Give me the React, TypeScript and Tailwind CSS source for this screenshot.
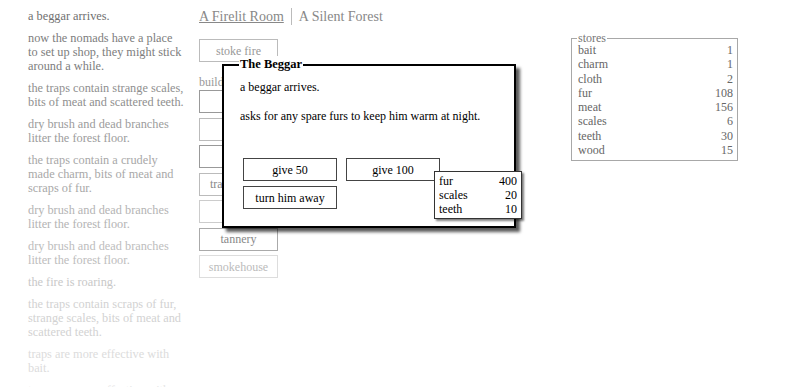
const notifications: [string, string][] = [
  ["a beggar arrives.", "text-[#6f6f6f]"],
  ["now the nomads have a place to set up shop, they might stick around a while.", "text-[#7d7d7d]"],
  ["the traps contain strange scales, bits of meat and scattered teeth.", "text-[#8f8f8f]"],
  ["dry brush and dead branches litter the forest floor.", "text-[#9c9c9c]"],
  ["the traps contain a crudely made charm, bits of meat and scraps of fur.", "text-[#a8a8a8]"],
  ["dry brush and dead branches litter the forest floor.", "text-[#b4b4b4]"],
  ["dry brush and dead branches litter the forest floor.", "text-[#bdbdbd]"],
  ["the fire is roaring.", "text-[#c8c8c8]"],
  ["the traps contain scraps of fur, strange scales, bits of meat and scattered teeth.", "text-[#d2d2d2]"],
  ["traps are more effective with bait.", "text-[#dcdcdc]"],
  ["traps are more effective with bait.", "text-[#e6e6e6]"],
];

const buildButtons: [string, string][] = [
  ["cart", "text-[#888] border-[#999]"],
  ["hut", "text-[#888] border-[#bbb]"],
  ["lodge", "text-[#888] border-[#999]"],
  ["trading post", "text-[#888] border-[#bbb]"],
  ["trap", "text-[#bbb] border-[#ccc]"],
  ["tannery", "text-[#888] border-[#aaa]"],
  ["smokehouse", "text-[#bbb] border-[#ddd]"],
];

const stores: [string, number][] = [
  ["bait", 1],
  ["charm", 1],
  ["cloth", 2],
  ["fur", 108],
  ["meat", 156],
  ["scales", 6],
  ["teeth", 30],
  ["wood", 15],
];

const costs: [string, number][] = [
  ["fur", 400],
  ["scales", 20],
  ["teeth", 10],
];

export default function App() {
  return (
    <div className="relative flex w-[800px] h-[387px] overflow-hidden bg-white font-['Liberation_Serif','Times_New_Roman',serif] text-[12px]">
      {/* notifications */}
      <div className="w-[156px] ml-[28px] mr-[15px] pt-[9px] shrink-0">
        {notifications.map(([text, color], i) => (
          <p key={i} className={`leading-[14px] mb-[8px] text-[12.3px] ${color}`}>
            {text}
          </p>
        ))}
      </div>

      {/* room */}
      <div className="w-[372px] shrink-0">
        <div className="flex items-center pt-[7px] h-[25px] text-[14px] text-[#888]">
          <span className="underline">A Firelit Room</span>
          <span className="mx-[7px] w-px h-[17px] bg-[#bbb]" />
          <span>A Silent Forest</span>
        </div>

        <div className="mt-[14px] w-[79px] h-[23px] border border-[#bbb] text-[#999] flex items-center justify-center">
          stoke fire
        </div>

        <div className="mt-[13px] text-[#999] leading-[14px]">build:</div>

        <div className="mt-[1px] flex flex-col gap-[4.5px]">
          {buildButtons.map(([label, cls]) => (
            <div
              key={label}
              className={`w-[79px] h-[23px] border flex items-center justify-center ${cls}`}
            >
              {label}
            </div>
          ))}
        </div>
      </div>

      {/* stores */}
      <div className="pt-[38px]">
        <div className="relative w-[167px] border border-[#a8a8a8] pt-[4px] pb-[3px] pl-[6px] pr-[4px] text-[#666]">
          <span className="absolute -top-[8px] left-[5px] bg-white px-[1px] leading-[14px] text-[#777]">stores</span>
          {stores.map(([name, n]) => (
            <div key={name} className="flex justify-between leading-[14.3px]">
              <span>{name}</span>
              <span>{n}</span>
            </div>
          ))}
        </div>
      </div>

      {/* event panel */}
      <div className="absolute left-[222px] top-[64px] w-[294px] h-[164px] bg-white border-2 border-black shadow-[4px_4px_3px_rgba(0,0,0,0.65)] text-black">
        <span className="absolute -top-[10px] left-[15px] bg-white px-[1px] font-bold text-[12.5px] leading-[16px]">
          The Beggar
        </span>
        <div className="pl-[16px] pt-[14px] leading-[14px]">
          <p>a beggar arrives.</p>
          <p className="mt-[15px]">asks for any spare furs to keep him warm at night.</p>
        </div>
        <div className="ml-[19px] mt-[35px] grid grid-cols-[94px_94px] gap-x-[9px] gap-y-[5px]">
          <div className="h-[23px] border border-[#444] flex items-center justify-center">give 50</div>
          <div className="h-[23px] border border-[#444] flex items-center justify-center">give 100</div>
          <div className="h-[23px] border border-[#444] flex items-center justify-center">turn him away</div>
        </div>
      </div>

      {/* tooltip */}
      <div className="absolute left-[434px] top-[171px] w-[88px] bg-white border border-[#333] shadow-[2px_2px_2px_rgba(0,0,0,0.5)] px-[4px] pt-[2px] pb-[2px] text-black">
        {costs.map(([name, n]) => (
          <div key={name} className="flex justify-between leading-[14px]">
            <span>{name}</span>
            <span>{n}</span>
          </div>
        ))}
      </div>
    </div>
  );
}
